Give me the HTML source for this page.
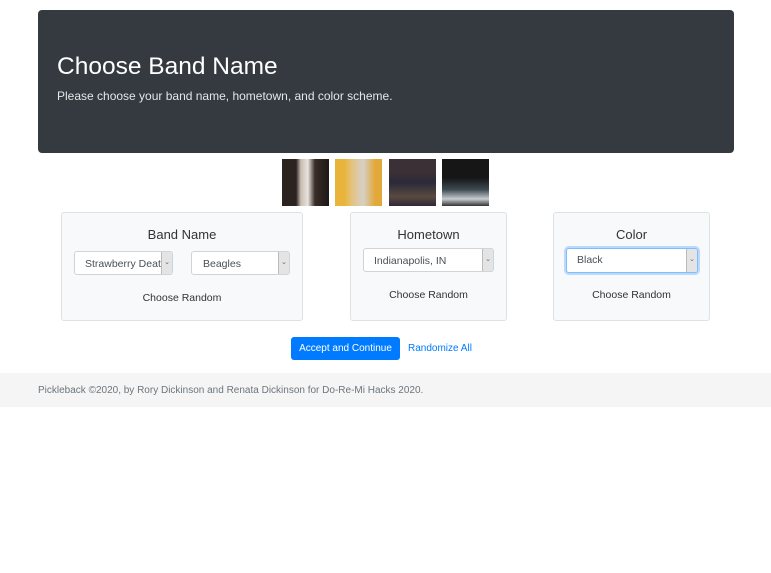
<!DOCTYPE html>
<html><head><style>
body{margin:0;width:771px;height:573px;background:#fff;font-family:"Liberation Sans",sans-serif;position:relative;overflow:hidden}
.a{position:absolute}
.jumbo{left:38px;top:10px;width:696px;height:143px;background:#343a40;border-radius:4px}
h1{position:absolute;left:57px;top:52px;margin:0;font-weight:400;font-size:24.5px;color:#fff;line-height:30px;white-space:nowrap}
.sub{left:57px;top:89px;font-size:12px;color:#e4e6e8;white-space:nowrap}
.img{top:159px;width:47px;height:47px}
.card{background:#f8f9fa;border:1px solid #dfe2e5;border-radius:3px;box-sizing:border-box}
.t{font-size:13px;color:#333;text-align:center;width:100%;top:14px}
.cr{font-size:10.5px;color:#333;text-align:center;width:100%}
.sel{background:#fff;border:1px solid #ced4da;border-radius:3px;box-sizing:border-box;font-size:10.5px;color:#495057;padding-left:10px;white-space:nowrap;overflow:hidden}
.arr{position:absolute;right:0;top:0;bottom:0;width:10px;background:#e4e4e4;border-left:1px solid #bbb;font-size:7px;color:#666;text-align:center}
</style></head><body>
<div class="a jumbo"></div>
<h1>Choose Band Name</h1>
<div class="a sub">Please choose your band name, hometown, and color scheme.</div>
<div class="a img" style="left:282px;background:linear-gradient(90deg,#2a2320 0 30%,#c9bcb0 40%,#e8e4df 55%,#3a2c26 70%,#1c1816)"></div>
<div class="a img" style="left:335px;background:linear-gradient(90deg,#e8b43a 0 20%,#e5c27c 35%,#d6d0c8 60%,#e2a93a 85%)"></div>
<div class="a img" style="left:389px;background:linear-gradient(180deg,#3a3036 0 30%,#2a2a3a 50%,#5a4a40 80%,#30283a)"></div>
<div class="a img" style="left:442px;background:linear-gradient(180deg,#161616 0 40%,#3c4a50 65%,#c8ccd0 85%,#333)"></div>

<div class="a card" style="left:61px;top:212px;width:242px;height:109px">
<div class="a t">Band Name</div>
<div class="a sel" style="left:12px;top:38px;width:99px;height:24px;line-height:24px">Strawberry Death<div class="arr" style="line-height:22px">⌄</div></div>
<div class="a sel" style="left:129px;top:38px;width:99px;height:24px;line-height:24px;padding-left:11px">Beagles<div class="arr" style="line-height:22px">⌄</div></div>
<div class="a cr" style="top:79px">Choose Random</div>
</div>
<div class="a card" style="left:350px;top:212px;width:157px;height:109px">
<div class="a t">Hometown</div>
<div class="a sel" style="left:12px;top:35px;width:131px;height:24px;line-height:24px">Indianapolis, IN<div class="arr" style="line-height:22px">⌄</div></div>
<div class="a cr" style="top:76px">Choose Random</div>
</div>
<div class="a card" style="left:553px;top:212px;width:157px;height:109px">
<div class="a t">Color</div>
<div class="a sel" style="left:12px;top:35px;width:132px;height:25px;line-height:23px;border:1px solid #80bdff;box-shadow:0 0 0 2px rgba(0,123,255,.25)">Black<div class="arr" style="line-height:21px">⌄</div></div>
<div class="a cr" style="top:76px">Choose Random</div>
</div>

<div class="a" style="left:291px;top:337px;width:109px;height:23px;background:#007bff;border-radius:3px;color:#fff;font-size:10px;line-height:23px;text-align:center">Accept and Continue</div>
<div class="a" style="left:408px;top:343px;font-size:10px;color:#007bff">Randomize All</div>

<div class="a" style="left:0;top:373px;width:771px;height:34px;background:#f5f5f5"></div>
<div class="a" style="left:38px;top:385px;font-size:10px;color:#6c757d;white-space:nowrap">Pickleback ©2020, by Rory Dickinson and Renata Dickinson for Do-Re-Mi Hacks 2020.</div>
</body></html>
